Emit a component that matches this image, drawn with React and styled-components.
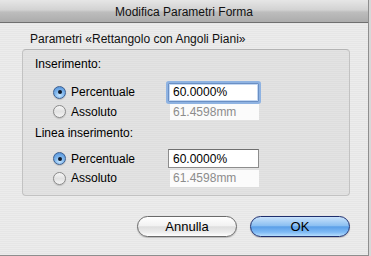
import styled, { createGlobalStyle } from 'styled-components'

const Global = createGlobalStyle`
  html, body { margin: 0; padding: 0; background: #d8d8d8; }
  body { font-family: "Liberation Sans", Arial, sans-serif; }
`

const Window = styled.div`
  width: 368px;
  height: 255px;
  border-right: 1px solid #8e8e8e;
  border-bottom: 1px solid #8e8e8e;
  display: flex;
  flex-direction: column;
  background: repeating-linear-gradient(180deg, #ececec 0px, #ececec 1px, #e6e6e6 1px, #e6e6e6 2px);
`

const TitleBar = styled.div`
  height: 21px;
  border-bottom: 1px solid #6f6f6f;
  background: linear-gradient(180deg, #e6e6e6 0%, #d2d2d2 45%, #bdbdbd 55%, #acacac 100%);
  display: flex;
  align-items: center;
  justify-content: center;
  font-size: 12px;
  color: #111;
  padding-top: 1px;
`

const Body = styled.div`
  padding: 9px 18px 0 22px;
  display: flex;
  flex-direction: column;
`

const GroupLabel = styled.div`
  font-size: 12px;
  color: #111;
  padding-left: 8px;
  height: 17px;
`

const GroupBox = styled.div`
  box-sizing: border-box;
  height: 147px;
  border: 1px solid #c2c2c2;
  border-top-color: #b4b4b4;
  border-radius: 4px;
  background: repeating-linear-gradient(180deg, #e3e3e3 0px, #e3e3e3 1px, #dedede 1px, #dedede 2px);
  padding: 7px 0 0 12px;
  display: flex;
  flex-direction: column;
`

const Heading = styled.div`
  font-size: 12px;
  color: #000;
  height: 15px;
  margin-top: ${p => p.$top || 0}px;
  margin-bottom: ${p => p.$gap}px;
`

const Row = styled.div`
  display: flex;
  align-items: center;
  height: ${p => p.$h}px;
  padding-left: 18px;
`

const Radio = styled.span`
  width: 11px;
  height: 11px;
  border-radius: 50%;
  flex: none;
  display: flex;
  align-items: center;
  justify-content: center;
  border: 1px solid ${p => (p.$on ? '#3d5f8f' : '#8a8a8a')};
  background: ${p =>
    p.$on
      ? 'radial-gradient(circle at 50% 75%, #c8e6ff 0%, #7fb6ec 45%, #4a8ad6 100%)'
      : 'linear-gradient(180deg, #f6f6f6 0%, #e2e2e2 50%, #f4f4f4 100%)'};
  box-shadow: 0 1px 1px rgba(0, 0, 0, 0.15);
  &::after {
    content: '';
    display: ${p => (p.$on ? 'block' : 'none')};
    width: 4px;
    height: 4px;
    border-radius: 50%;
    background: #101a2a;
  }
`

const Label = styled.span`
  font-size: 12px;
  color: #000;
  width: 97px;
  padding-left: 5px;
`

const Field = styled.div`
  box-sizing: border-box;
  width: ${p => (p.$disabled ? 89 : 91)}px;
  height: ${p => p.$h}px;
  margin-left: ${p => (p.$disabled ? 2 : 0)}px;
  display: flex;
  align-items: center;
  padding-left: ${p => (p.$disabled ? 3 : 4)}px;
  font-size: 12px;
  background: ${p => (p.$disabled ? '#fbfbfb' : '#fff')};
  color: ${p => (p.$disabled ? '#8c8c8c' : '#000')};
  border: ${p => (p.$disabled ? 'none' : '1px solid #8d8d8d')};
  border-top-color: #6f6f6f;
  ${p =>
    p.$focus &&
    `
    border: 1px solid #6a8fc4;
    box-shadow: 0 0 0 2px #8fb3e2, inset 0 0 0 1px #c4d8f2;
    border-radius: 1px;
  `}
`

const Footer = styled.div`
  display: flex;
  justify-content: flex-end;
  gap: 13px;
  padding-top: 20px;
`

const Button = styled.button`
  width: 100px;
  height: 21px;
  border-radius: 11px;
  font-family: "Liberation Sans", Arial, sans-serif;
  font-size: 13px;
  color: #000;
  padding: 0;
  border: 1px solid ${p => (p.$primary ? '#1f2f6e' : '#6a6a6a')};
  background: ${p =>
    p.$primary
      ? 'linear-gradient(180deg, #c9e2fb 0%, #8cc0f2 45%, #5b9fe8 52%, #7fbaf5 80%, #b6defc 100%)'
      : 'linear-gradient(180deg, #ffffff 0%, #f2f2f2 45%, #dedede 52%, #ececec 80%, #ffffff 100%)'};
  box-shadow: 0 1px 1px rgba(0, 0, 0, 0.2);
`

const RadioRow = ({ on, label, value, focus, disabled, h, fh }) => (
  <Row $h={h}>
    <Radio $on={on} />
    <Label>{label}</Label>
    <Field $focus={focus} $disabled={disabled} $h={fh}>{value}</Field>
  </Row>
)

export default function App() {
  return (
    <>
      <Global />
      <Window>
        <TitleBar>Modifica Parametri Forma</TitleBar>
        <Body>
          <GroupLabel>Parametri «Rettangolo con Angoli Piani»</GroupLabel>
          <GroupBox>
            <Heading $gap={10}>Inserimento:</Heading>
            <RadioRow on label="Percentuale" value="60.0000%" focus h={20} fh={19} />
            <RadioRow label="Assoluto" value="61.4598mm" disabled h={19} fh={16} />
            <Heading $top={5} $gap={8}>Linea inserimento:</Heading>
            <RadioRow on label="Percentuale" value="60.0000%" h={19} fh={19} />
            <RadioRow label="Assoluto" value="61.4598mm" disabled h={20} fh={17} />
          </GroupBox>
          <Footer>
            <Button>Annulla</Button>
            <Button $primary>OK</Button>
          </Footer>
        </Body>
      </Window>
    </>
  )
}
